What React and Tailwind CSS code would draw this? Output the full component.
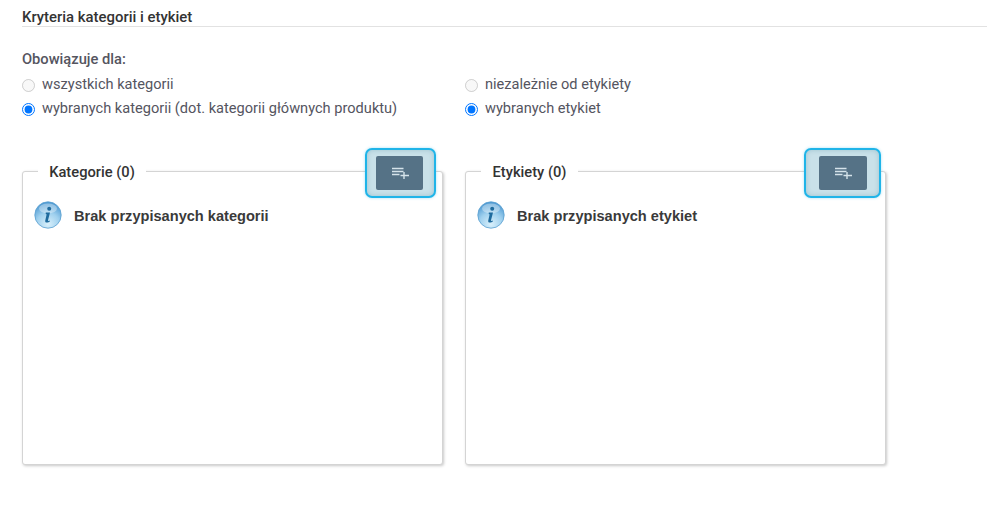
import React from "react";

function AddListIcon() {
  return (
    <svg className="ml-[2px]" width="17" height="12" viewBox="0 0 17 12" fill="none">
      <path d="M0 1.5H11.5M0 4.5H11.5M0 7.5H7.5" stroke="#d5e3ea" strokeWidth="1.4" />
      <path d="M12 5V12M8.5 8.5H17" stroke="#d5e3ea" strokeWidth="1.4" />
    </svg>
  );
}

function InfoIcon() {
  return (
    <svg width="28" height="28" viewBox="0 0 28 28">
      <defs>
        <radialGradient id="infoGrad" cx="50%" cy="85%" r="80%">
          <stop offset="0%" stopColor="#d9f0fb" />
          <stop offset="55%" stopColor="#9fd0ee" />
          <stop offset="100%" stopColor="#4f9ad2" />
        </radialGradient>
      </defs>
      <circle cx="14" cy="14" r="13.2" fill="url(#infoGrad)" stroke="#5b9fd0" strokeWidth="0.8" />
      <ellipse cx="14" cy="7.5" rx="9" ry="5" fill="#ffffff" opacity="0.35" />
      <circle cx="15.2" cy="7.8" r="2" fill="#1f6b9e" />
      <path d="M11.8 11.6H16L14 19.2C13.8 20 14.2 20.3 15.6 19.6L15.8 20.4C14.4 21.8 10.8 22.4 11.2 19.8L12.6 13.4L11.6 12.6Z" fill="#1f6b9e" />
    </svg>
  );
}

function Radio({ label, checked, disabled }) {
  return (
    <label className="flex items-center h-[24px] gap-[7px] text-[14.6px] text-[#55555f]">
      <input
        type="radio"
        checked={!!checked}
        disabled={!!disabled}
        readOnly
        className="w-[13px] h-[13px] m-0 shrink-0"
      />
      <span>{label}</span>
    </label>
  );
}

function Panel({ title, legendWidth, emptyText, buttonRight, buttonWidth, innerShift, innerWidth }) {
  return (
    <div className="relative w-[421px] h-[294px] bg-white border border-[#d4d4d4] rounded-[3px] shadow-[1px_1px_3px_rgba(0,0,0,0.22)]">
      <div
        className="absolute top-[-10px] left-[15px] h-[20px] bg-white flex items-center justify-center text-[14.7px] font-medium text-[#333333]"
        style={{ width: legendWidth }}
      >
        {title}
      </div>
      <div
        className="absolute top-[-24px] h-[50px] flex items-center justify-center rounded-[7px] border-2 border-[#1fb4e8] bg-[#c9e1e9] shadow-[0_0_3px_rgba(31,180,232,0.4),inset_0_0_5px_rgba(60,130,150,0.3)]"
        style={{ right: buttonRight, width: buttonWidth, paddingRight: innerShift }}
      >
        <div
          className="h-[34px] rounded-[2px] bg-[#557286] flex items-center justify-center"
          style={{ width: innerWidth }}
        >
          <AddListIcon />
        </div>
      </div>
      <div className="flex items-center gap-[12px] mt-[29px] ml-[11px]">
        <InfoIcon />
        <span className="font-['Liberation_Sans',sans-serif] text-[14.6px] font-bold text-[#3a3a3a] pt-[4px]">{emptyText}</span>
      </div>
    </div>
  );
}

export default function App() {
  return (
    <div className="w-[987px] h-[505px] bg-white overflow-hidden font-['Roboto',sans-serif]">
      <div className="ml-[22px] h-[27px] border-b border-[#e2e2e2] flex items-start pt-[8px]">
        <h2 className="text-[14.9px] leading-[18px] font-medium text-[#333333]">Kryteria kategorii i etykiet</h2>
      </div>
      <div className="ml-[22px] mt-[22px] text-[14.7px] leading-[20px] font-medium text-[#55555f]">Obowiązuje dla:</div>
      <div className="ml-[22px] mt-[4px] flex">
        <div className="w-[443px]">
          <Radio label="wszystkich kategorii" disabled />
          <Radio label="wybranych kategorii (dot. kategorii głównych produktu)" checked />
        </div>
        <div>
          <Radio label="niezależnie od etykiety" disabled />
          <Radio label="wybranych etykiet" checked />
        </div>
      </div>
      <div className="ml-[22px] mt-[50px] flex gap-[22px]">
        <Panel title="Kategorie (0)" legendWidth={108} emptyText="Brak przypisanych kategorii" buttonRight={6} buttonWidth={71} innerShift={2} innerWidth={47} />
        <Panel title="Etykiety (0)" legendWidth={97} emptyText="Brak przypisanych etykiet" buttonRight={4} buttonWidth={77} innerShift={0} innerWidth={48} />
      </div>
    </div>
  );
}
